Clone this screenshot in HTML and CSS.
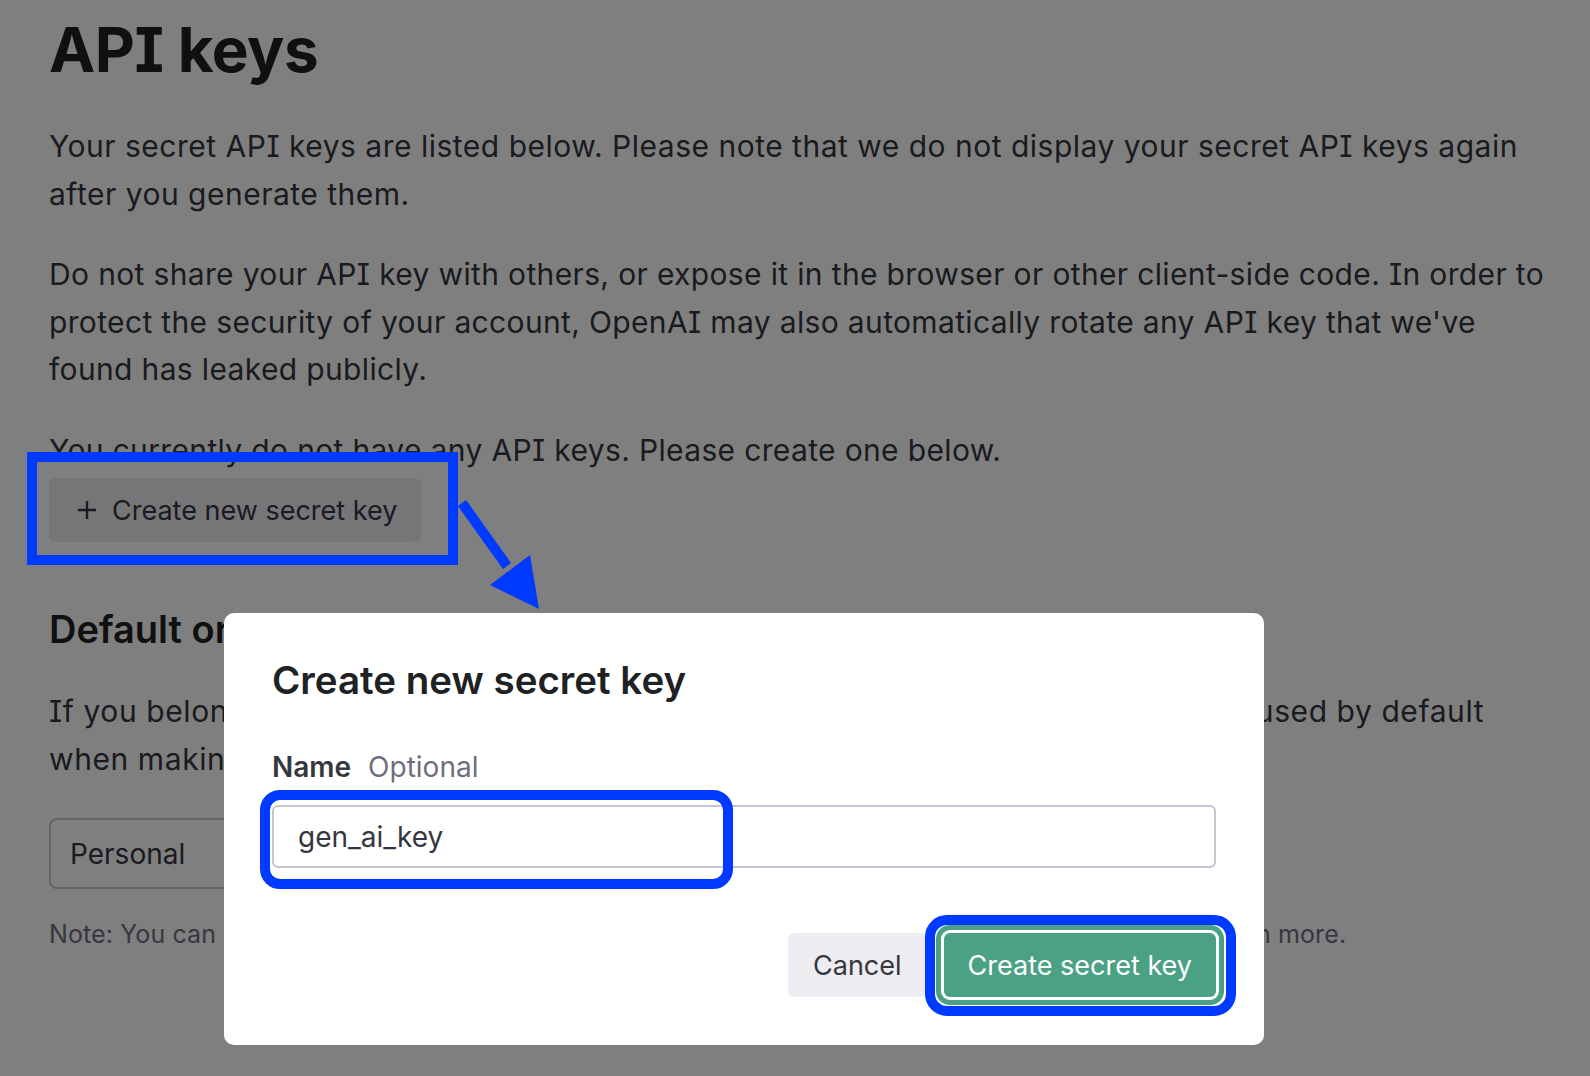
FILE: index.html
```html
<!DOCTYPE html>
<html lang="en">
<head>
<meta charset="utf-8">
<title>API keys</title>
<link rel="stylesheet" href="styles.css">
</head>
<body>
<main class="page">
  <h1 class="page-title">API keys</h1>
  <p class="para">Your secret API keys are listed below. Please note that we do not display your secret API keys again after you generate them.</p>
  <p class="para para-snug">Do not share your API key with others, or expose it in the browser or other client-side code. In order to protect the security of your account, OpenAI may also automatically rotate any API key that we've found has leaked publicly.</p>
  <p class="para para-snug para-last">You currently do not have any API keys. Please create one below.</p>
  <div class="create-wrap">
    <button class="btn btn-gray btn-create" type="button">
      <svg class="plus" viewBox="0 0 24 24" width="24" height="24" aria-hidden="true"><path d="M12 3v18M3 12h18" stroke="currentColor" stroke-width="2.4" fill="none"/></svg>
      <span>Create new secret key</span>
    </button>
    <span class="annot annot-rect"></span>
    <svg class="annot-arrow" viewBox="0 0 110 130" width="110" height="130" aria-hidden="true">
      <line x1="21" y1="13" x2="66" y2="76" stroke="#0039ff" stroke-width="10"/>
      <polygon points="49,95 89,65 98,119" fill="#0039ff"/>
    </svg>
  </div>
  <h2 class="section-title">Default organization</h2>
  <p class="para para-org">If you belong to multiple organizations, this setting controls which organization is used by default when making requests with the API keys above.</p>
  <div class="select">
    <span>Personal</span>
    <svg class="chev" viewBox="0 0 24 24" width="24" height="24" aria-hidden="true"><path d="M6 9l6 6 6-6" stroke="currentColor" stroke-width="2" fill="none"/></svg>
  </div>
  <p class="note">Note: You can also specify which organization to use for each API request. See <a href="#">Authentication</a> to learn more.</p>
</main>

<div class="overlay"></div>

<div class="modal" role="dialog" aria-label="Create new secret key">
  <h2 class="modal-title">Create new secret key</h2>
  <div class="field-label"><span class="label-name">Name</span><span class="label-opt">Optional</span></div>
  <div class="input-wrap">
    <div class="input">gen_ai_key</div>
    <span class="annot annot-input"></span>
  </div>
  <div class="modal-actions">
    <button class="btn btn-cancel" type="button">Cancel</button>
    <button class="btn btn-green" type="button">Create secret key<span class="annot annot-green"></span></button>
  </div>
</div>
</body>
</html>
```

FILE: styles.css
```css
* { box-sizing: border-box; }

html, body {
  margin: 0;
  padding: 0;
}

body {
  background: #ffffff;
  font-family: Inter, "Liberation Sans", Arial, sans-serif;
  font-feature-settings: "cv08";
  color: #353740;
  width: 1590px;
  height: 1076px;
  overflow: hidden;
  position: relative;
}

.page {
  padding: 13px 0 0 49px;
  width: 1552px;
}

.page-title {
  margin: 0 0 36px;
  font-size: 62px;
  line-height: 74px;
  font-weight: 700;
  color: #202123;
  letter-spacing: -0.5px;
}

.para {
  margin: 0 0 33px;
  font-size: 30px;
  letter-spacing: 0.5px;
  line-height: 47.5px;
  color: #353740;
}

.para-snug { letter-spacing: 0.35px; }

.para-last { margin-bottom: 4px; }

.create-wrap {
  position: relative;
  display: inline-block;
}

.btn {
  font-family: inherit;
  font-feature-settings: inherit;
  font-size: 27px;
  border: 0;
  border-radius: 6px;
  height: 64px;
  display: inline-flex;
  align-items: center;
  padding: 0 24px;
  white-space: nowrap;
  cursor: pointer;
}

.btn-gray {
  background: #ececf1;
  color: #353740;
}

.btn-create {
  padding-left: 26px;
  gap: 13px;
}

.plus { display: block; flex: none; }

.annot {
  position: absolute;
  z-index: 5;
  border: 10px solid #0039ff;
  pointer-events: none;
}

.annot-rect {
  left: -22px;
  top: -26px;
  right: -37px;
  bottom: -23px;
}

.annot-arrow {
  position: absolute;
  z-index: 5;
  left: 392px;
  top: 12px;
}

.section-title {
  margin: 65px 0 37px;
  font-size: 38px;
  line-height: 44px;
  font-weight: 600;
  color: #202123;
}

.para-org {
  margin-bottom: 35px;
  letter-spacing: 0.58px;
}

.select {
  width: 420px;
  height: 71px;
  border: 2px solid #c5c5d2;
  border-radius: 8px;
  display: flex;
  align-items: center;
  justify-content: space-between;
  padding: 0 20px 0 19px;
  font-size: 28px;
  color: #353740;
}

.chev { color: #8e8ea0; }

.note {
  margin: 27px 0 0;
  font-size: 25px;
  letter-spacing: 0.1px;
  line-height: 36px;
  color: #6e6e80;
}

.note a { color: inherit; text-decoration: none; }

.overlay {
  position: fixed;
  z-index: 1;
  inset: 0;
  background: rgba(0, 0, 0, 0.5);
}

.modal {
  position: absolute;
  z-index: 2;
  left: 224px;
  top: 613px;
  width: 1040px;
  height: 432px;
  background: #ffffff;
  border-radius: 10px;
  padding: 45px 48px 48px;
}

.modal-title {
  margin: 0;
  font-size: 38.5px;
  line-height: 44px;
  font-weight: 600;
  color: #202123;
}

.field-label {
  margin-top: 47px;
  font-size: 28px;
  line-height: 36px;
  display: flex;
  gap: 17px;
}

.label-name { font-weight: 600; color: #353740; }
.label-opt { color: #6e6e80; }

.input-wrap {
  position: relative;
  margin-top: 20px;
}

.input {
  height: 63px;
  border: 2px solid #c5c5d2;
  border-radius: 6px;
  padding: 0 24px;
  display: flex;
  align-items: center;
  font-size: 28px;
  color: #353740;
}

.annot-input {
  left: -12px;
  top: -15px;
  width: 473px;
  height: 99px;
  border-radius: 20px;
}

.modal-actions {
  margin-top: 65px;
  display: flex;
  justify-content: flex-end;
  gap: 17px;
}

.btn-cancel {
  background: #ececf1;
  color: #353740;
  padding: 0 25px;
}

.btn-green {
  position: relative;
  background: #4ba183;
  color: #ffffff;
  box-shadow: 0 0 0 3px #ffffff, 0 0 0 8px #4ba183;
}

.annot-green {
  left: -19px;
  top: -18px;
  right: -20px;
  bottom: -19px;
  border-radius: 22px;
}
```
